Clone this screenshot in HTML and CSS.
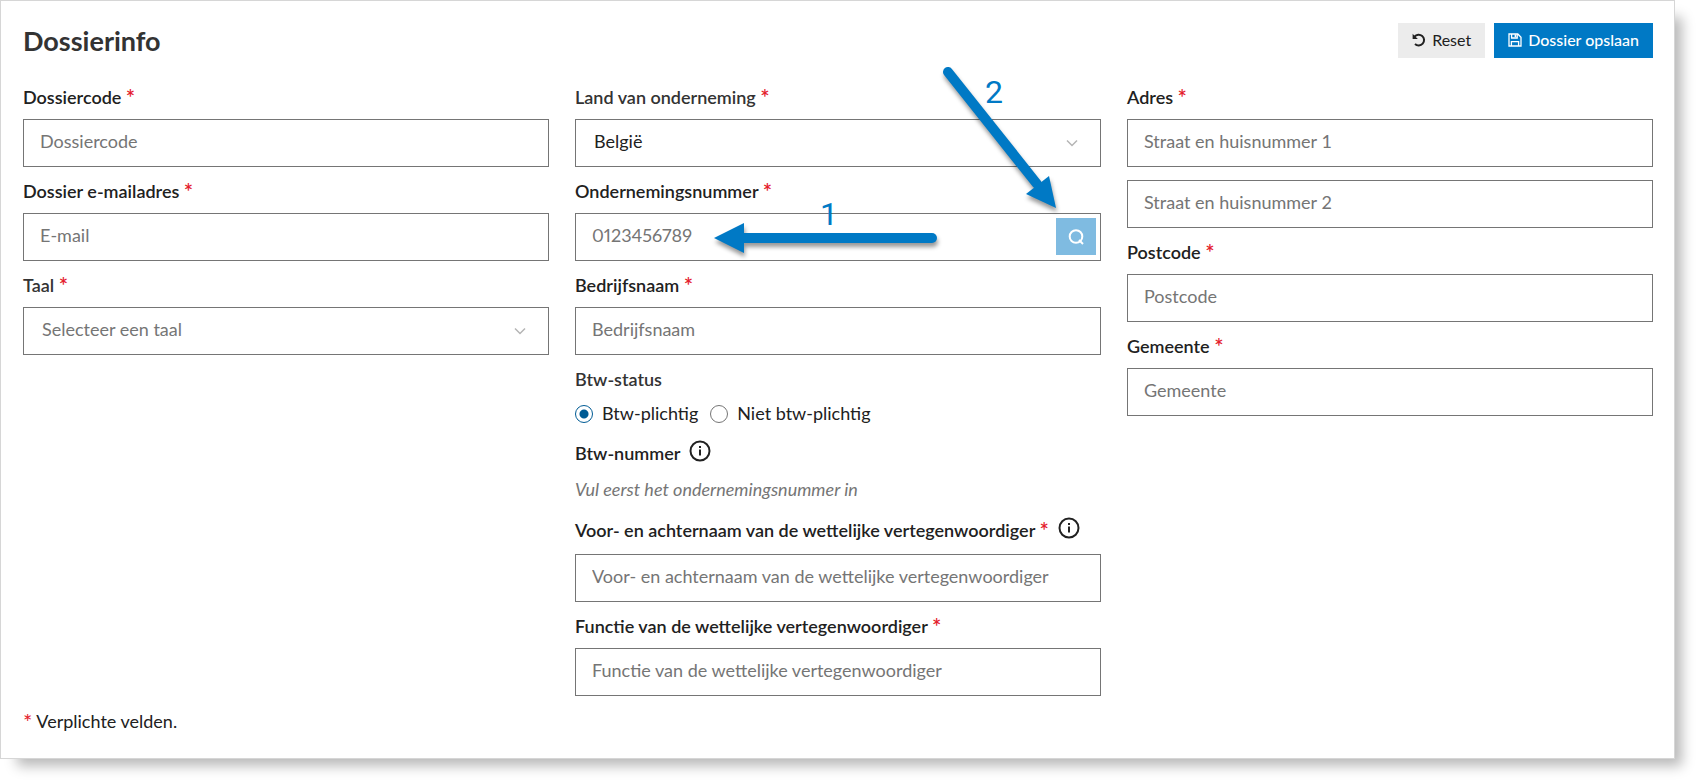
FILE: index.html
```html
<!DOCTYPE html>
<html lang="nl">
<head>
    <meta charset="UTF-8">
    <meta name="viewport" content="width=device-width, initial-scale=1.0">
    <title>Dossierinfo</title>
    <link rel="stylesheet" href="styles.css">
</head>

<body>
    <form class="card">
        <div class="header">
            <h1>Dossierinfo</h1>
            <div class="actions">
                <button type="reset" class="btn">
                    <svg width="14" height="14" viewBox="0 0 14 14" fill="none" stroke="currentColor" stroke-width="2">
                        <path d="M2.5 3.6A5.4 5.4 0 1 1 3 11" />
                        <path d="M0.6 0.8v5.2h5.2z" fill="currentColor" stroke="none" />
                    </svg>
                    Reset
                </button>
                <button type="submit" class="btn btn-primary">
                    <svg width="14" height="14" viewBox="0 0 14 14" fill="none" stroke="currentColor" stroke-width="1.3">
                        <path d="M1 1h8.8L13 4.2V13H1z" />
                        <path d="M3.6 1v4h5.6V1M3.4 13V8.6h7.2V13" />
                        <path d="M6.6 1.4h1.6v2.8H6.6z" fill="currentColor" stroke="none" />
                    </svg>
                    Dossier opslaan
                </button>
            </div>
        </div>

        <div class="columns">
            <div class="column">
                <div class="field">
                    <label for="code">Dossiercode <span class="req">*</span></label>
                    <input type="text" id="code" class="control" placeholder="Dossiercode">
                </div>
                <div class="field">
                    <label for="email">Dossier e-mailadres <span class="req">*</span></label>
                    <input type="email" id="email" class="control" placeholder="E-mail">
                </div>
                <div class="field">
                    <label for="taal" class="soft">Taal <span class="req">*</span></label>
                    <div class="select">
                        <select id="taal" class="control empty">
                            <option>Selecteer een taal</option>
                            <option>Nederlands</option>
                        </select>
                        <svg class="chevron" width="12" height="8" viewBox="0 0 12 8"><path d="M1 1.5l5 5 5-5" /></svg>
                    </div>
                </div>
            </div>

            <div class="column">
                <div class="field">
                    <label for="land" class="soft">Land van onderneming <span class="req">*</span></label>
                    <div class="select">
                        <select id="land" class="control">
                            <option>België</option>
                            <option>Nederland</option>
                        </select>
                        <svg class="chevron" width="12" height="8" viewBox="0 0 12 8"><path d="M1 1.5l5 5 5-5" /></svg>
                    </div>
                </div>
                <div class="field">
                    <label for="nummer">Ondernemingsnummer <span class="req">*</span></label>
                    <div class="control search">
                        <input type="text" id="nummer" placeholder="0123456789">
                        <button type="button" class="search-btn" aria-label="Zoeken">
                            <svg width="16" height="16" viewBox="0 0 16 16" fill="none" stroke="currentColor" stroke-width="2">
                                <circle cx="8" cy="7.5" r="6.3" />
                                <path d="M11 11l4 4" />
                            </svg>
                        </button>
                    </div>
                </div>
                <div class="field">
                    <label for="naam">Bedrijfsnaam <span class="req">*</span></label>
                    <input type="text" id="naam" class="control" placeholder="Bedrijfsnaam">
                </div>
                <fieldset class="field">
                    <legend class="soft">Btw-status</legend>
                    <div class="radios">
                        <label><input type="radio" name="btw" checked> Btw-plichtig</label>
                        <label><input type="radio" name="btw"> Niet btw-plichtig</label>
                    </div>
                </fieldset>
                <div class="field">
                    <div class="label-row">
                        <span class="label">Btw-nummer</span>
                        <svg class="info" width="22" height="22" viewBox="0 0 22 22">
                            <circle cx="11" cy="11" r="9.5" />
                            <path d="M11 9.5v6M11 6v2" />
                        </svg>
                    </div>
                    <p class="hint">Vul eerst het ondernemingsnummer in</p>
                </div>
                <div class="field">
                    <div class="label-row">
                        <label for="persoon">Voor- en achternaam van de wettelijke vertegenwoordiger <span class="req">*</span></label>
                        <svg class="info" width="22" height="22" viewBox="0 0 22 22">
                            <circle cx="11" cy="11" r="9.5" />
                            <path d="M11 9.5v6M11 6v2" />
                        </svg>
                    </div>
                    <input type="text" id="persoon" class="control" placeholder="Voor- en achternaam van de wettelijke vertegenwoordiger">
                </div>
                <div class="field">
                    <label for="functie">Functie van de wettelijke vertegenwoordiger <span class="req">*</span></label>
                    <input type="text" id="functie" class="control" placeholder="Functie van de wettelijke vertegenwoordiger">
                </div>

                <!-- step arrows, drawn over the fields -->
                <svg class="steps" width="400" height="200" viewBox="0 0 400 200">
                    <g class="arrow">
                        <path class="shaft" d="M231 152H40" />
                        <path d="M13 152l30-15v30z" />
                    </g>
                    <g class="arrow">
                        <path class="shaft" d="M247-14L336 98" />
                        <path d="M355 122l-30-14 23-18z" />
                    </g>
                    <text x="119" y="139">1</text>
                    <text x="284" y="17">2</text>
                </svg>
            </div>

            <div class="column">
                <div class="field">
                    <label for="straat1">Adres <span class="req">*</span></label>
                    <input type="text" id="straat1" class="control" placeholder="Straat en huisnummer 1">
                </div>
                <div class="field">
                    <input type="text" class="control" placeholder="Straat en huisnummer 2" aria-label="Straat en huisnummer 2">
                </div>
                <div class="field">
                    <label for="postcode">Postcode <span class="req">*</span></label>
                    <input type="text" id="postcode" class="control" placeholder="Postcode">
                </div>
                <div class="field">
                    <label for="gemeente">Gemeente <span class="req">*</span></label>
                    <input type="text" id="gemeente" class="control" placeholder="Gemeente">
                </div>
            </div>
        </div>

        <p class="note"><span class="req">*</span> Verplichte velden.</p>
    </form>
</body>
</html>
```
FILE: styles.css
```css
* {
    box-sizing: border-box;
}

body {
    min-height: 100vh;
    margin: 0;
    background-color: #fff;
    color: #212121;
    font-family: Lato, "Liberation Sans", sans-serif;
    font-size: 18px;
    line-height: 22px;
}

.card {
    margin-right: 23px;
    padding: 22px 21px 25px 22px;
    border: 1px solid #d6d6d6;
    background-color: #fff;
    box-shadow: 12px 12px 12px -5px rgba(0, 0, 0, 0.28);
}

.header {
    display: flex;
    justify-content: space-between;
    align-items: center;
    margin-bottom: 28px;
}

h1 {
    margin: 0;
    font-size: 27px;
    line-height: 32px;
    color: #333;
}

.actions {
    display: flex;
    gap: 9px;
}

.btn {
    display: flex;
    align-items: center;
    gap: 6px;
    height: 35px;
    padding: 0 14px 2px;
    border: none;
    background-color: #ececec;
    color: #212121;
    font-family: inherit;
    font-size: 16px;
    cursor: pointer;
}

.btn-primary {
    background-color: #0079c5;
    color: #fff;
    font-weight: 500;
}

.columns {
    display: grid;
    grid-template-columns: repeat(3, 1fr);
    gap: 26px;
}

.column {
    position: relative;
    min-width: 0;
}

.field {
    margin: 0 0 13px;
    padding: 0;
    border: none;
}

.field > label,
legend {
    display: block;
    margin-bottom: 11px;
    padding: 0;
}

.field label,
.label,
legend {
    font-weight: 600;
}

.field .soft {
    color: #333;
}

.req {
    font-size: 22px;
    line-height: 18px;
    vertical-align: -2px;
    color: #e4202c;
}

.control {
    display: block;
    width: 100%;
    height: 48px;
    padding: 0 16px 4px;
    border: 1px solid #757575;
    border-radius: 0;
    background-color: #fff;
    color: #212121;
    font-family: inherit;
    font-size: inherit;
}

input::placeholder {
    color: #757575;
    opacity: 1;
}

.select {
    position: relative;
}

select.control {
    appearance: none;
    padding-left: 18px;
}

select.empty {
    color: #757575;
}

.chevron {
    position: absolute;
    top: 20px;
    right: 23px;
    fill: none;
    stroke: #b5b5b5;
    stroke-width: 1.5;
    pointer-events: none;
}

.search {
    display: flex;
    padding: 4px;
}

.search input {
    flex: 1;
    min-width: 0;
    padding: 0 12px 4px;
    border: none;
    font-family: inherit;
    font-size: inherit;
    font-variant-numeric: proportional-nums;
}

.search-btn {
    width: 40px;
    height: 37px;
    padding: 0;
    border: none;
    background-color: #7fbbe1;
    color: #fff;
}

.search-btn svg {
    display: block;
    margin: 0 auto;
}

.radios {
    display: flex;
    gap: 12px;
}

.radios label {
    display: flex;
    align-items: center;
    gap: 9px;
    font-weight: 400;
}

.radios input {
    appearance: none;
    width: 18px;
    height: 18px;
    margin: 4px 0 2px;
    border: 1px solid #757575;
    border-radius: 50%;
}

.radios input:checked {
    border-color: #005b94;
    background: radial-gradient(circle, #005b94 4px, #fff 5px);
}

.label-row {
    display: flex;
    align-items: flex-end;
    gap: 9px;
    height: 26px;
    margin-bottom: 13px;
}

.info {
    margin-bottom: 2px;
    fill: none;
    stroke: #212121;
    stroke-width: 2;
}

.hint {
    margin: 0;
    line-height: 25px;
    font-style: italic;
    color: #757575;
}

.note {
    margin: 0;
    line-height: 24px;
}

.steps {
    position: absolute;
    top: 0;
    right: 0;
    overflow: visible;
    pointer-events: none;
    fill: #0079c5;
    font-family: Roboto, "Liberation Sans", sans-serif;
    font-size: 32px;
}

.arrow {
    filter: drop-shadow(1px 4px 2px rgba(0, 0, 0, 0.4));
}

.shaft {
    stroke: #0079c5;
    stroke-width: 10;
    stroke-linecap: round;
}
```
